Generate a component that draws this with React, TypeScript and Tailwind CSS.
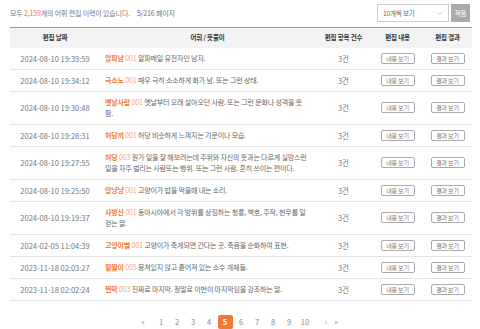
import { ChevronDown } from 'lucide-react';

const rows = [
  { date: '2024-08-10 19:39:59', word: '알파남', no: '001', desc: '알파메일 유전자인 남자.' },
  { date: '2024-08-10 19:34:12', word: '극소노', no: '001', desc: '매우 극히 소소하게 화가 남. 또는 그런 상태.' },
  { date: '2024-08-10 19:30:48', word: '옛날사람', no: '001', desc: '옛날부터 오래 살아오던 사람. 또는 그런 문화나 성격을 뜻함.' },
  { date: '2024-08-10 19:28:31', word: '허당끼', no: '001', desc: '허당 비슷하게 느껴지는 기운이나 모습.' },
  { date: '2024-08-10 19:27:55', word: '허당', no: '003', desc: '뭔가 일을 잘 해보려는데 주위와 자신의 뜻과는 다르게 실망스런 일을 자주 벌리는 사람또는 행위. 또는 그런 사람. 흔히 쓰이는 편이다.' },
  { date: '2024-08-10 19:25:50', word: '앙냥냥', no: '001', desc: '고양이가 밥을 먹을때 내는 소리.' },
  { date: '2024-08-10 19:19:37', word: '사방신', no: '001', desc: '동아시아에서 각 방위를 상징하는 청룡, 백호, 주작, 현무를 일컫는 말.' },
  { date: '2024-02-05 11:04:39', word: '고양이별', no: '001', desc: '고양이가 죽게되면 간다는 곳. 죽음을 순화하여 표현.' },
  { date: '2023-11-18 02:03:27', word: '짤짤이', no: '005', desc: '뭉쳐있지 않고 흩어져 있는 소수 개체들.' },
  { date: '2023-11-18 02:02:24', word: '찐막', no: '003', desc: '진짜로 마지막. 정말로 이번이 마지막임을 강조하는 말.' },
];

const pages = [1, 2, 3, 4, 5, 6, 7, 8, 9, 10];

function SmallButton({ label }: { label: string }) {
  return (
    <button className="h-[11px] w-[34px] rounded-[2px] border border-[#aaa] bg-white text-[6px] leading-[9px] tracking-[-0.2px] text-[#777]">
      {label}
    </button>
  );
}

export default function App() {
  return (
    <div
      className="h-[329px] w-[480px] bg-white px-[10px] pt-[4px] text-[7px] leading-[11px] tracking-[-0.15px] text-[#666]"
      style={{ fontFamily: '"Noto Sans CJK KR", "Noto Sans", sans-serif' }}
    >
      {/* summary + per-page select */}
      <div className="flex h-[18px] items-center">
        <p className="flex-1 text-[7px] text-[#777]">
          모두 <span className="text-[#f07b34]">2,159</span>개의 어휘 편집 이력이 있습니다.
          <span className="ml-[7px] text-[#555]">5</span>/216 페이지
        </p>
        <div className="flex h-[18px] w-[72px] items-center justify-between border border-[#ccc] px-[5px] text-[6.5px] text-[#666]">
          <span>10개씩 보기</span>
          <ChevronDown className="h-[7px] w-[7px] text-[#999]" />
        </div>
        <button className="ml-[2px] h-[18px] w-[19px] bg-[#aaa] text-[6.5px] text-white">적용</button>
      </div>

      <table className="mt-[5px] w-[462px] table-fixed border-collapse">
        <colgroup>
          <col className="w-[90px]" />
          <col className="w-[215px]" />
          <col className="w-[57px]" />
          <col className="w-[51px]" />
          <col className="w-[49px]" />
        </colgroup>
        <thead>
          <tr className="h-[20px] border-t border-[#999] bg-[#f3f3f3] text-[6.5px] font-bold text-[#333]">
            <th className="font-bold">편집 날짜</th>
            <th className="font-bold">어휘 / 뜻풀이</th>
            <th className="font-bold">편집 항목 건수</th>
            <th className="font-bold">편집 내용</th>
            <th className="font-bold">편집 결과</th>
          </tr>
        </thead>
        <tbody>
          {rows.map((r) => (
            <tr key={r.date} className="border-b border-[#e3e3e3]">
              <td className="py-[5px] text-center text-[7.5px] tracking-normal text-[#777]">{r.date}</td>
              <td className="py-[5px] pl-[5px] pr-[6px] text-[#666]">
                <span className="font-bold text-[#f07b34]">{r.word}</span>{' '}
                <span className="text-[#f5a878]">{r.no}</span>{' '}
                {r.desc}
              </td>
              <td className="text-center text-[7.5px] text-[#777]">3건</td>
              <td className="text-center">
                <SmallButton label="내용 보기" />
              </td>
              <td className="text-center">
                <SmallButton label="결과 보기" />
              </td>
            </tr>
          ))}
        </tbody>
      </table>

      {/* pagination */}
      <div className="mt-[14px] flex items-center justify-center text-[7.5px] tracking-normal text-[#888]">
        <span className="mr-[6px] w-[8px] text-center">«</span>
        {pages.map((p) =>
          p === 5 ? (
            <span
              key={p}
              className="mx-[0.5px] flex h-[14px] w-[15px] items-center justify-center rounded-[2px] bg-[#f07b34] font-bold text-white"
            >
              {p}
            </span>
          ) : (
            <span key={p} className="w-[16px] text-center">
              {p}
            </span>
          ),
        )}
        <span className="ml-[8px] w-[10px] text-center">›</span>
        <span className="w-[10px] text-center">»</span>
      </div>
    </div>
  );
}
